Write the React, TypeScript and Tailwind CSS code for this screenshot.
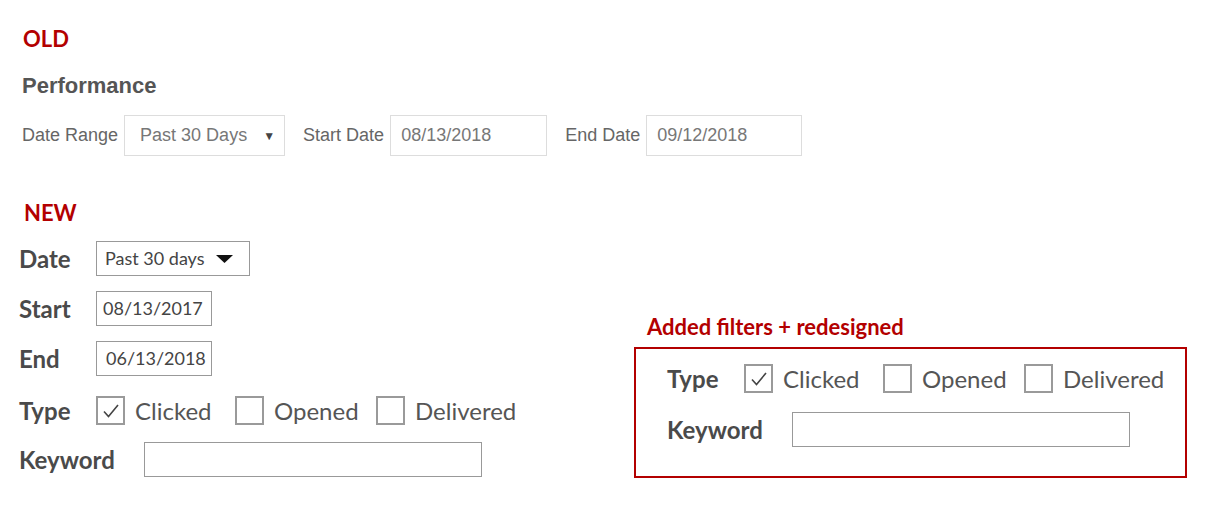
import React from "react";

const red = "text-[#b30000]";

function Check({ checked }: { checked?: boolean }) {
  return (
    <span className="flex h-[29px] w-[29px] shrink-0 items-center justify-center border-2 border-[#9a9a9a] bg-white">
      {checked && (
        <svg width="18" height="16" viewBox="0 0 18 16" fill="none">
          <path d="M2 8.5 L6.5 13.5 L16 2" stroke="#444" strokeWidth="1.6" />
        </svg>
      )}
    </span>
  );
}

function TypeRow() {
  return (
    <div className="flex h-[29px] items-center leading-[28px]">
      <span className="w-[77px] text-[24px] font-bold text-[#4a4a4a]">Type</span>
      <Check checked />
      <span className="ml-[10px] w-[100px] text-[24px] text-[#555]">Clicked</span>
      <Check />
      <span className="ml-[10px] w-[102px] text-[24px] text-[#555]">Opened</span>
      <Check />
      <span className="ml-[10px] text-[24px] text-[#555]">Delivered</span>
    </div>
  );
}

function KeywordRow() {
  return (
    <div className="flex h-[35px] items-center">
      <span className="w-[125px] text-[24px] font-bold leading-[28px] text-[#4a4a4a]">Keyword</span>
      <div className="h-[35px] w-[338px] border border-[#999]" />
    </div>
  );
}

function OldField({ label, value, width }: { label: string; value: string; width: string }) {
  return (
    <div className="flex items-center">
      <span className="mr-[6px] text-[18px] text-[#666]">{label}</span>
      <div className={`flex h-[41px] items-center border border-[#ddd] px-[10px] text-[18px] text-[#777] ${width}`}>
        {value}
      </div>
    </div>
  );
}

function NewInput({ label, children, width, pad }: { label: string; children: React.ReactNode; width: string; pad: string }) {
  return (
    <div className="flex h-[35px] items-center">
      <span className="w-[77px] text-[24px] font-bold leading-[28px] text-[#4a4a4a]">{label}</span>
      <div className={`flex h-[35px] items-center border border-[#999] text-[18px] text-[#444] ${width} ${pad}`}>
        {children}
      </div>
    </div>
  );
}

export default function App() {
  return (
    <div className="relative h-[512px] w-[1219px] overflow-hidden bg-white font-['Lato',sans-serif]">
      <section className="pl-[23px] pt-[27px]">
        <div className={`text-[22px] font-bold leading-[24px] ${red}`}>OLD</div>
        <div className="mt-[22px] font-['Liberation_Sans',Arial,sans-serif]">
          <div className="ml-[-1px] text-[22px] font-bold leading-[26px] text-[#555]">Performance</div>
          <div className="mt-[16px] ml-[-1px] flex items-center gap-[18px]">
            <div className="flex items-center">
              <span className="mr-[6px] text-[18px] text-[#666]">Date Range</span>
              <div className="flex h-[41px] w-[161px] items-center justify-between border border-[#ddd] pl-[15px] pr-[9px] text-[18px] text-[#777]">
                Past 30 Days
                <span className="text-[12px] text-[#444]">▼</span>
              </div>
            </div>
            <OldField label="Start Date" value="08/13/2018" width="w-[157px]" />
            <OldField label="End Date" value="09/12/2018" width="w-[156px]" />
          </div>
        </div>
      </section>

      <section className="mt-[45px] flex">
        <div className="w-[634px] shrink-0 pl-[19px]">
          <div className={`ml-[5px] text-[22px] font-bold leading-[24px] ${red}`}>NEW</div>
          <div className="mt-[16px] flex flex-col">
            <NewInput label="Date" width="w-[154px]" pad="pl-[8px]">
              Past 30 days
              <svg className="ml-[11px]" width="17" height="8" viewBox="0 0 17 8">
                <path d="M0 0 H17 L8.5 8 Z" fill="#111" />
              </svg>
            </NewInput>
            <div className="mt-[15px]">
              <NewInput label="Start" width="w-[116px]" pad="pl-[6px]">08/13/2017</NewInput>
            </div>
            <div className="mt-[15px]">
              <NewInput label="End" width="w-[116px]" pad="pl-[9px]">06/13/2018</NewInput>
            </div>
            <div className="mt-[20px]">
              <TypeRow />
            </div>
            <div className="mt-[17px]">
              <KeywordRow />
            </div>
          </div>
        </div>

        <div className="pt-[114px]">
          <div className={`ml-[13px] text-[22px] font-bold leading-[24px] ${red}`}>Added filters + redesigned</div>
          <div className="mt-[8px] h-[131px] w-[553px] border-2 border-[#b30000] pl-[31px] pt-[15px]">
            <TypeRow />
            <div className="mt-[19px]">
              <KeywordRow />
            </div>
          </div>
        </div>
      </section>
    </div>
  );
}
